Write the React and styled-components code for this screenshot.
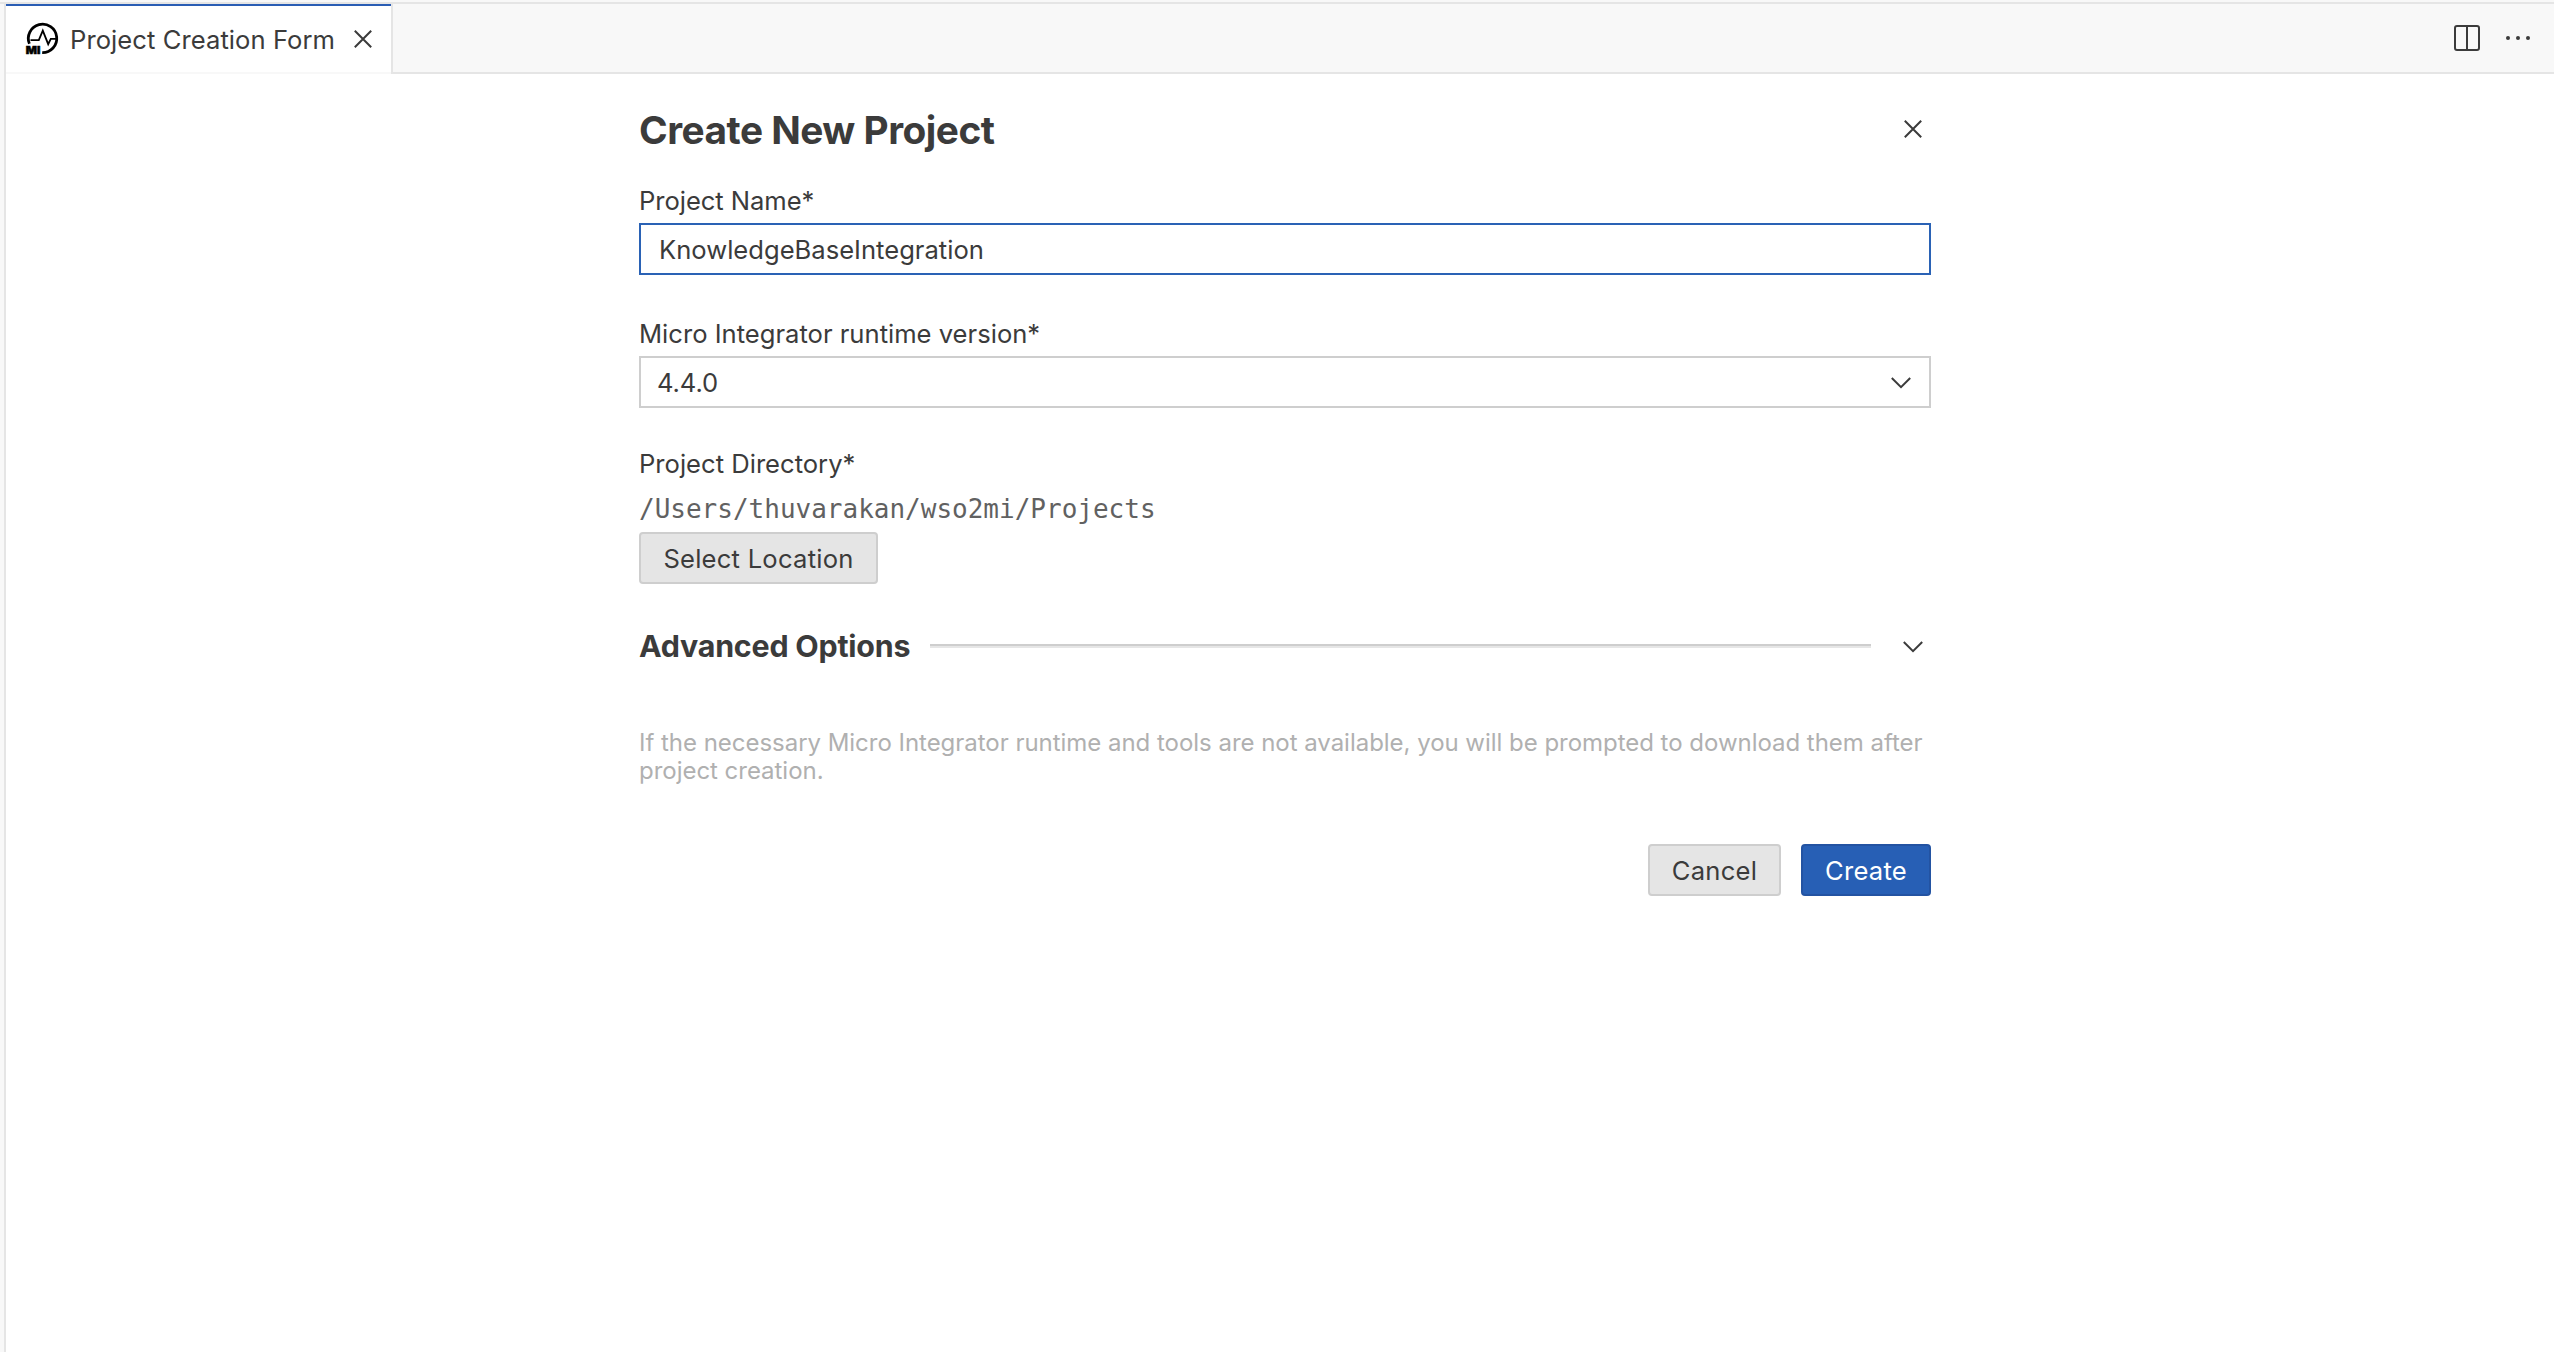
import React from "react";
import styled, { createGlobalStyle } from "styled-components";

const Global = createGlobalStyle`
  * { box-sizing: border-box; }
  body { margin: 0; background: #fff; color: #3b3b3b; font-family: Inter, "Liberation Sans", sans-serif; font-size: 25.6px; }
  button, input { font: inherit; color: inherit; letter-spacing: inherit; margin: 0; }
`;
const Window = styled.div`
  display: flex; flex-direction: column; height: 1352px; padding-top: 2px; background: #f8f8f8;
`;
const Editor = styled.div`
  flex: 1; display: flex; flex-direction: column; margin-left: 4px;
  border-left: 2px solid #e5e5e5; background: #fff;
`;
const TopRule = styled.div`height: 2px; flex: none; background: #e5e5e5;`;
const TabBar = styled.div`display: flex; height: 70px; flex: none;`;
const Tab = styled.div`
  display: flex; align-items: center; width: 385px; padding: 0 20px; 
  border-top: 2px solid #2a5db4; border-bottom: 2px solid #f8f8f8; background: #fff;
`;
const TabTitle = styled.span`
  flex: none; width: 284px; margin-left: 11px; padding-top: 1px; line-height: 32px; white-space: nowrap;
  letter-spacing: ${p => p.$ls || 0}px;
`;
const TabActions = styled.div`
  flex: 1; display: flex; justify-content: flex-end; align-items: center; gap: 26px;
  padding-right: 24px; background: #f8f8f8; border-left: 2px solid #e5e5e5; border-bottom: 2px solid #e5e5e5;
`;
const Icon = styled.svg`display: block; flex: none; overflow: visible; fill: none; stroke: #3b3b3b; stroke-width: 2;`;
const Logo = styled(Icon)`stroke: #000;`;
const LogoText = styled.text`fill: #000; stroke: #000; stroke-width: 0.5; font-family: Inter, sans-serif; font-size: 11px; font-weight: 900;`;
const Dots = styled(Icon)`fill: #3b3b3b; stroke: none;`;
const Form = styled.main`
  width: 1292px; margin-left: 633px; padding-top: 28px; display: flex; flex-direction: column;
`;
const Header = styled.header`
  display: flex; justify-content: space-between; align-items: center; height: 56px; padding: 0 9px 2px 0;
`;
const Title = styled.h1`margin: 0; padding-top: 2px; font-size: 38.8px; line-height: 48px; font-weight: 700; letter-spacing: ${p => p.$ls || 0}px;`;
const Field = styled.div`display: flex; flex-direction: column; align-items: stretch; margin-top: ${p => p.$top}px;`;
const Label = styled.label`height: 38px; line-height: 32px; white-space: nowrap; letter-spacing: ${p => p.$ls || 0}px;`;
const TextInput = styled.input`
  height: 52px; padding: 0 18px; border: 2px solid #2a62b5; border-radius: 0; outline: none; background: #fff;
  letter-spacing: ${p => p.$ls || 0}px;
`;
const Select = styled.div`
  display: flex; align-items: center; justify-content: space-between; height: 52px; padding: 1px 18px 0 16px;
  border: 2px solid #cecece; letter-spacing: ${p => p.$ls || 0}px;
`;
const Path = styled.div`
  height: 39px; line-height: 32px; margin-top: 7px; color: #616161;
  font-family: "DejaVu Sans Mono", monospace; font-size: 26px; white-space: nowrap;
`;
const Button = styled.button`
  width: ${p => p.$w}px; height: 52px; padding: 1px 0 0; border-radius: 4px; text-align: center; white-space: nowrap;
  border: 2px solid ${p => (p.$primary ? "#2353a2" : "#cecece")};
  background: ${p => (p.$primary ? "#275fb5" : "#e5e5e5")};
  color: ${p => (p.$primary ? "#fff" : "#3b3b3b")};
  letter-spacing: ${p => p.$ls || 0}px;
`;
const Section = styled.div`
  display: flex; align-items: center; height: 40px; margin-top: 42px; padding-right: 8px;
  ${Icon} { margin-top: 2px; }
`;
const SectionTitle = styled.h2`
  margin: 0; width: 291px; font-size: 30.4px; line-height: 40px; font-weight: 700; white-space: nowrap; letter-spacing: ${p => p.$ls || 0}px;
`;
const Divider = styled.div`flex: 1; height: 4px; margin-right: 32px; border-top: 2px solid #cecece; border-bottom: 2px solid #e6e6e6;`;
const Note = styled.p`
  margin: 63px 0 0; font-size: 24px; line-height: 28px; color: #b0b0b0; white-space: nowrap; letter-spacing: ${p => p.$ls || 0}px;
`;
const Footer = styled.footer`display: flex; justify-content: flex-end; gap: 20px; margin-top: 59px;`;

const CloseIcon = () => (
  <Icon width="18" height="18" viewBox="0 0 18 18"><path d="M.8.8 17.2 17.2M17.2.8.8 17.2" /></Icon>
);
const ChevronIcon = () => (
  <Icon width="20" height="12" viewBox="0 0 20 12"><path d="M.8 1 10 10.2 19.2 1" /></Icon>
);
const LogoIcon = () => (
  <Logo width="33" height="32" viewBox="0 0 33 32">
    <path d="M3.4 20.8A14.2 14.2 0 1 1 16.2 29.6" strokeWidth="2.8" />
    <path d="M4.5 17.2h8.3l4-9.6 5.4 13.6 2.6-5.4H30.5" strokeWidth="1.8" />
    <LogoText x="-0.3" y="31" textLength="14.6" lengthAdjust="spacingAndGlyphs">MI</LogoText>
  </Logo>
);

export default function App() {
  return (
    <Window>
      <Global />
      <TopRule />
      <Editor>
        <TabBar>
          <Tab>
            <LogoIcon />
            <TabTitle $ls={0.06}>Project Creation Form</TabTitle>
            <CloseIcon />
          </Tab>
          <TabActions>
            <Icon width="26" height="26" viewBox="0 0 26 26"><rect x="1" y="1" width="24" height="24" rx="2" /><path d="M13 1v24" /></Icon>
            <Dots width="24" height="4" viewBox="0 0 24 4">
              <circle cx="2" cy="2" r="2" /><circle cx="12" cy="2" r="2" /><circle cx="22" cy="2" r="2" />
            </Dots>
          </TabActions>
        </TabBar>
        <Form>
          <Header><Title $ls={-0.5}>Create New Project</Title><CloseIcon /></Header>
          <Field $top={27}>
            <Label $ls={-0.05}>Project Name*</Label>
            <TextInput defaultValue="KnowledgeBaseIntegration" />
          </Field>
          <Field $top={43}>
            <Label>Micro Integrator runtime version*</Label>
            <Select $ls={-0.1}><span>4.4.0</span><ChevronIcon /></Select>
          </Field>
          <Field $top={40}>
            <Label>Project Directory*</Label>
            <Path>/Users/thuvarakan/wso2mi/Projects</Path>
            <Button $w={239} $ls={0.23}>Select Location</Button>
          </Field>
          <Section><SectionTitle $ls={-0.22}>Advanced Options</SectionTitle><Divider /><ChevronIcon /></Section>
          <Note $ls={-0.03}>
            If the necessary Micro Integrator runtime and tools are not available, you will be prompted to download them after<br />
            project creation.
          </Note>
          <Footer>
            <Button $w={133} $ls={0.25}>Cancel</Button>
            <Button $w={130} $ls={0.25} $primary>Create</Button>
          </Footer>
        </Form>
      </Editor>
    </Window>
  );
}
